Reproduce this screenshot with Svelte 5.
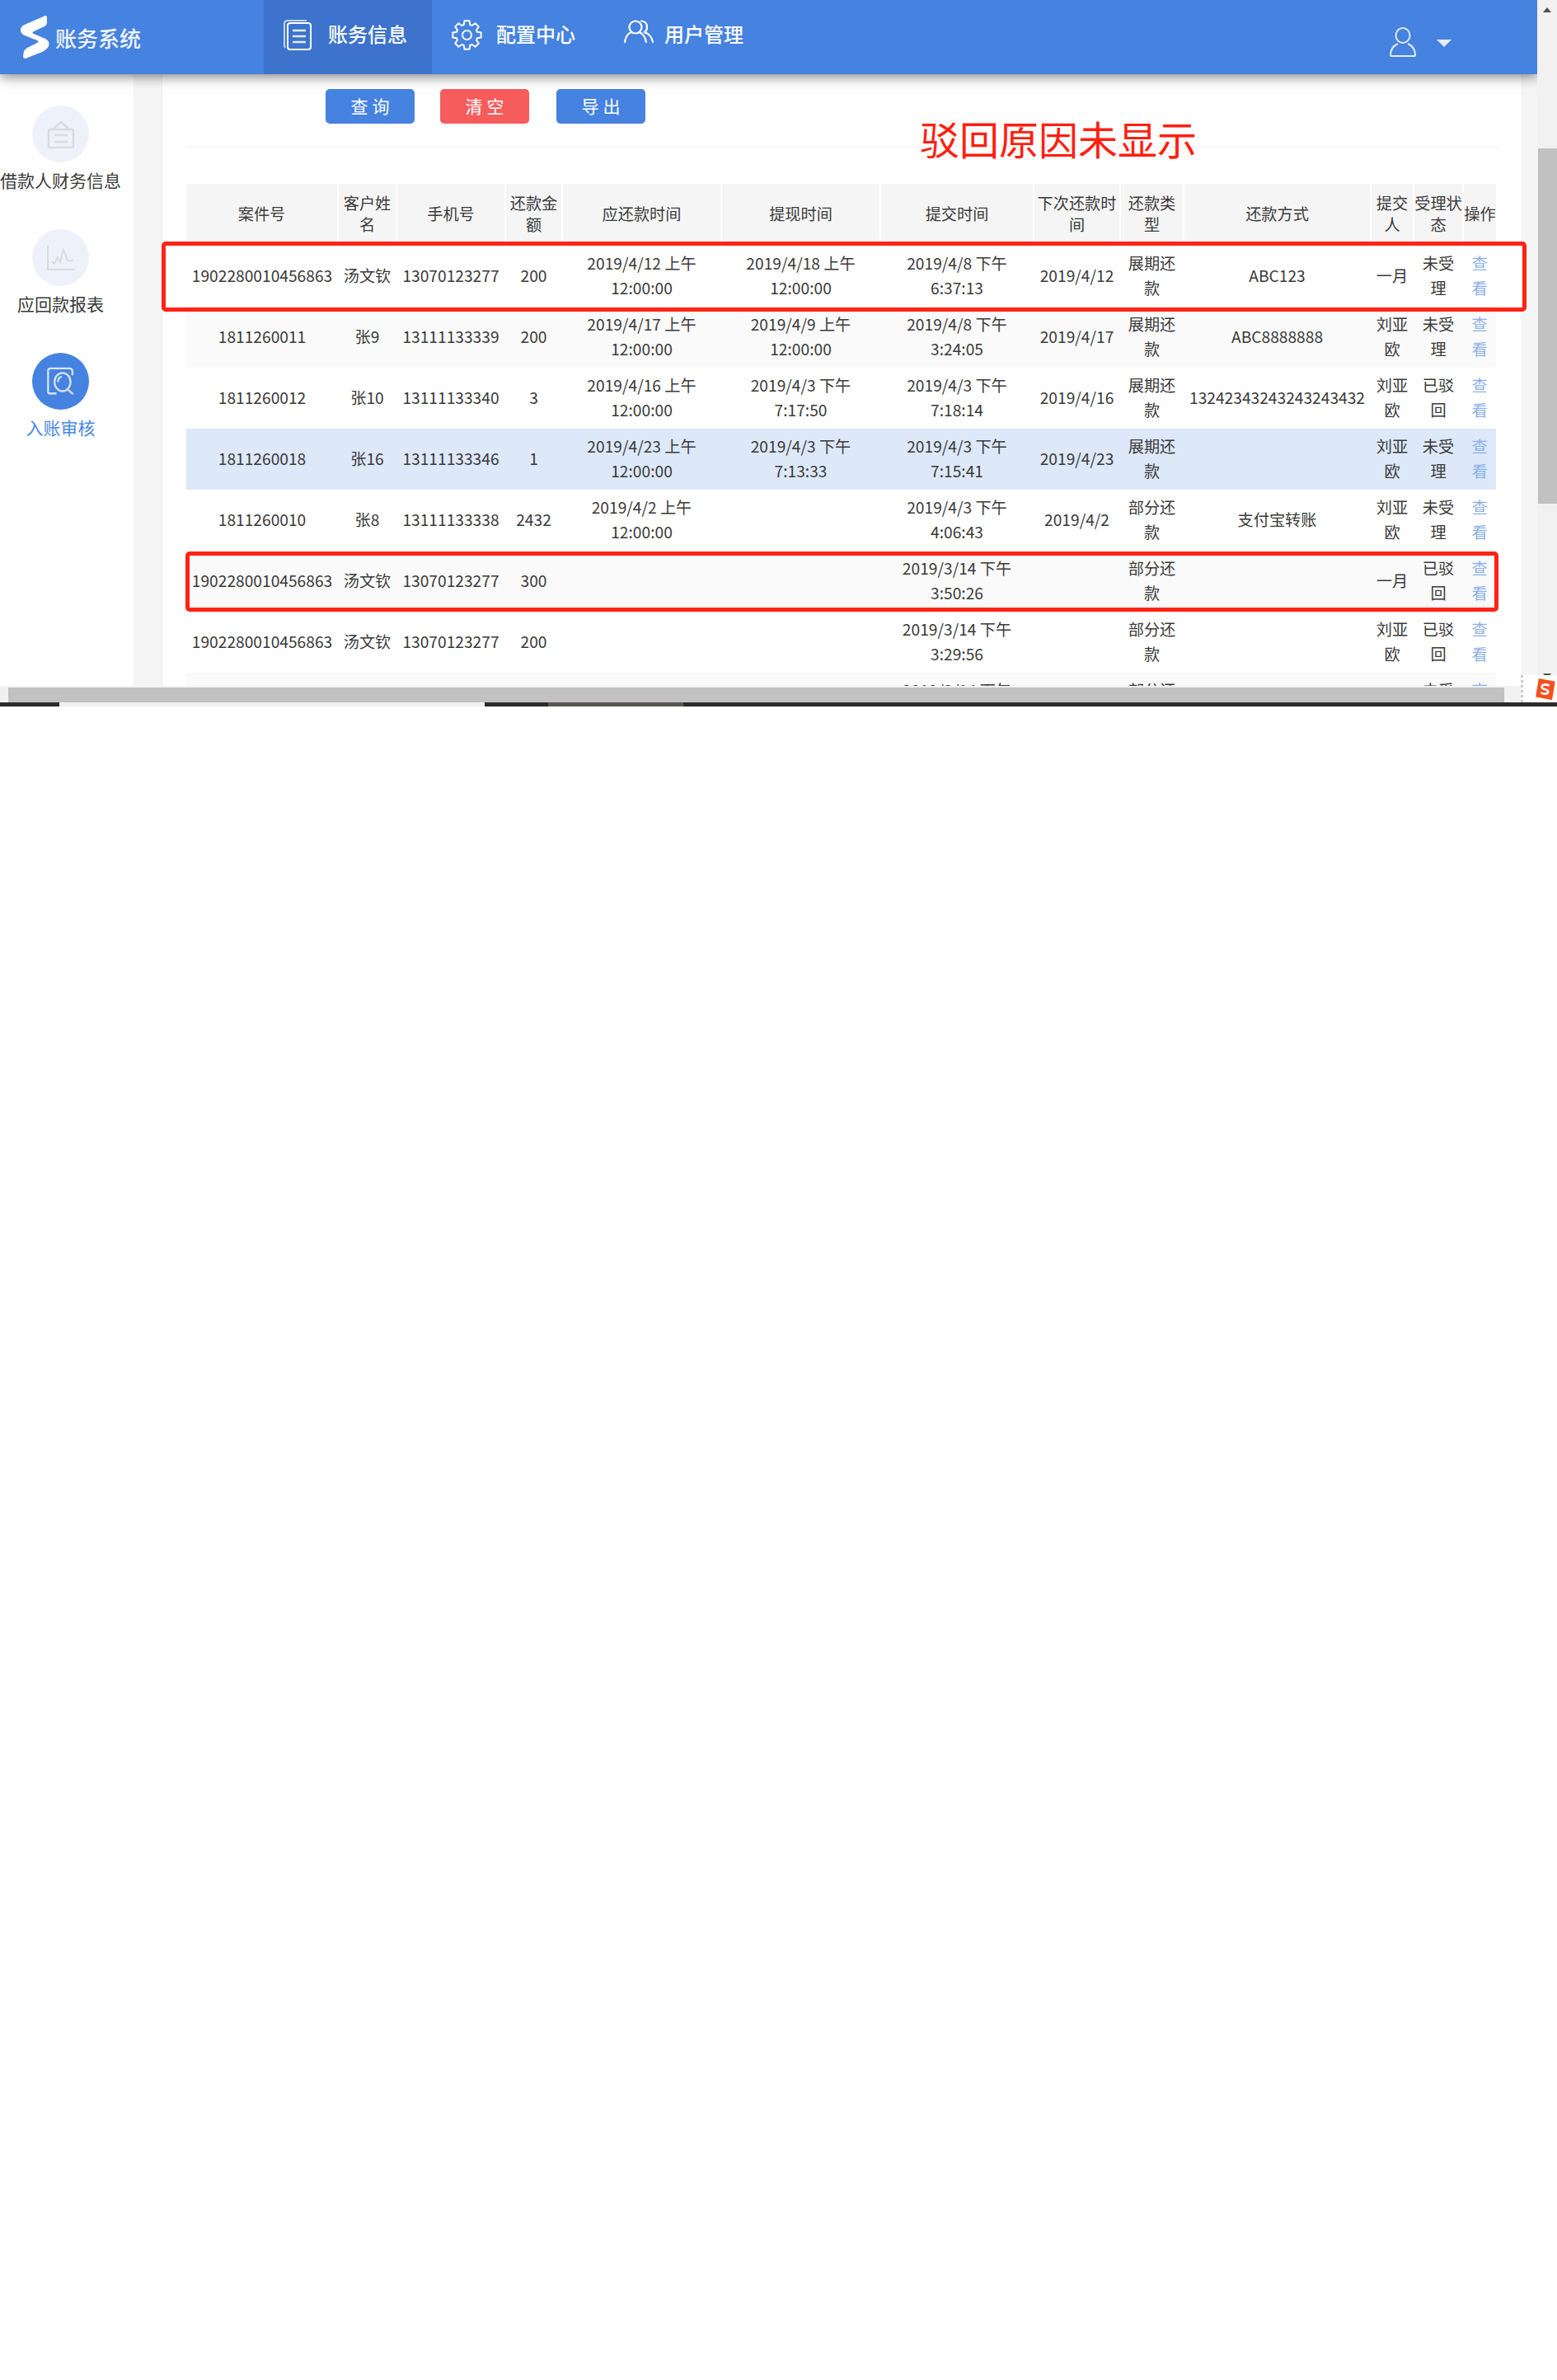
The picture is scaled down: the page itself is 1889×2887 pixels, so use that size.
<script>
  const columns = ["案件号", "客户姓名", "手机号", "还款金额", "应还款时间", "提现时间", "提交时间", "下次还款时间", "还款类型", "还款方式", "提交人", "受理状态", "操作"]

  const rows = [
    ["1902280010456863", "汤文钦", "13070123277", "200", "2019/4/12 上午 12:00:00", "2019/4/18 上午 12:00:00", "2019/4/8 下午 6:37:13", "2019/4/12", "展期还款", "ABC123", "一月", "未受理"],
    ["1811260011", "张9", "13111133339", "200", "2019/4/17 上午 12:00:00", "2019/4/9 上午 12:00:00", "2019/4/8 下午 3:24:05", "2019/4/17", "展期还款", "ABC8888888", "刘亚欧", "未受理"],
    ["1811260012", "张10", "13111133340", "3", "2019/4/16 上午 12:00:00", "2019/4/3 下午 7:17:50", "2019/4/3 下午 7:18:14", "2019/4/16", "展期还款", "13242343243243243432", "刘亚欧", "已驳回"],
    ["1811260018", "张16", "13111133346", "1", "2019/4/23 上午 12:00:00", "2019/4/3 下午 7:13:33", "2019/4/3 下午 7:15:41", "2019/4/23", "展期还款", "", "刘亚欧", "未受理"],
    ["1811260010", "张8", "13111133338", "2432", "2019/4/2 上午 12:00:00", "", "2019/4/3 下午 4:06:43", "2019/4/2", "部分还款", "支付宝转账", "刘亚欧", "未受理"],
    ["1902280010456863", "汤文钦", "13070123277", "300", "", "", "2019/3/14 下午 3:50:26", "", "部分还款", "", "一月", "已驳回"],
    ["1902280010456863", "汤文钦", "13070123277", "200", "", "", "2019/3/14 下午 3:29:56", "", "部分还款", "", "刘亚欧", "已驳回"],
    ["1902280010456863", "汤文钦", "13070123277", "200", "", "", "2019/3/14 下午 3:20:11", "", "部分还款", "", "一月", "未受理"],
  ]

  const widths = [184, 71, 132, 69, 193, 193, 186, 105, 77, 227, 52, 60, 40]

  // the three time columns wrap earlier than the others
  const isTime = (col) => col >= 4 && col <= 6

  // 8-tooth gear outline
  function gear(cx, cy, outer, inner) {
    const pts = []
    for (let i = 0; i < 8; i++) {
      const a = (i * Math.PI) / 4
      for (const [off, r] of [[-0.3, inner], [-0.17, outer], [0.17, outer], [0.3, inner]]) {
        pts.push(`${(cx + r * Math.sin(a + off)).toFixed(1)} ${(cy - r * Math.cos(a + off)).toFixed(1)}`)
      }
    }
    return "M" + pts.join(" L") + " Z"
  }
</script>

<div class="window">
  <header class="topbar">
    <div class="logo">
      <svg width="40" height="54" viewBox="0 0 40 54">
        <path d="M31 1 Q33 1 33 4 L33 10 Q33 12 30 14 L17 20 Q14 22 17 23 L31 29 Q37 32 35 38 Q33 42 27 45 L7 53 Q4 53 4 50 L5 44 Q6 42 9 40 L21 34 Q24 32 21 31 L6 25 Q0 22 1 17 Q2 13 8 11 Z" fill="#fff" />
      </svg>
      <span>账务系统</span>
    </div>
    <nav class="tabs">
      <div class="tab active">
        <svg width="34" height="37" viewBox="0 0 34 37" fill="none" stroke="#fff" stroke-width="2">
          <path d="M2 34 Q1 33 1 30 V5 Q1 1 5 1 H28" stroke-opacity="0.7" />
          <rect x="5" y="4" width="28" height="32" rx="3" />
          <path d="M11 13 H27 M11 20 H27 M11 27 H27" stroke-width="2.5" stroke-opacity="0.85" />
        </svg>
        <span>账务信息</span>
      </div>
      <div class="tab">
        <svg width="37" height="37" viewBox="0 0 37 37" fill="none" stroke="#fff" stroke-width="2">
          <path d={gear(18.5, 18.5, 17.5, 13)} stroke-linejoin="round" />
          <circle cx="18.5" cy="18.5" r="5.5" />
        </svg>
        <span>配置中心</span>
      </div>
      <div class="tab">
        <svg width="37" height="29" viewBox="0 0 37 29" fill="none" stroke="#fff" stroke-width="2.2" stroke-linecap="round">
          <circle cx="14" cy="9" r="7.5" />
          <path d="M1 27 Q3 16 10 15 M18 15 Q25 17 27 27" />
          <path d="M21 1.5 Q28 2 28 9 Q28 14 24 15 Q33 17 35 27" />
        </svg>
        <span>用户管理</span>
      </div>
    </nav>
    <div class="user">
      <svg width="32" height="36" viewBox="0 0 32 36" fill="none" stroke="#fff" stroke-width="2" stroke-opacity="0.85">
        <ellipse cx="16" cy="10" rx="8.5" ry="9" />
        <path d="M10 20 Q1 24 1 34 Q1 35 3 35 H29 Q31 35 31 34 Q31 24 22 20" />
      </svg>
      <span class="caret"></span>
    </div>
  </header>

  <div class="body">
    <aside class="sidebar">
      <div class="item">
        <div class="circle">
          <svg width="34" height="34" viewBox="0 0 34 34" fill="none" stroke="#d9dbdf" stroke-width="2.5">
            <path d="M7 11 L17 2 L27 11" />
            <rect x="2" y="11" width="30" height="22" rx="2" />
            <path d="M9 18 H25 M9 26 H25" />
          </svg>
        </div>
        <p>借款人财务信息</p>
      </div>
      <div class="item">
        <div class="circle">
          <svg width="34" height="30" viewBox="0 0 34 30" fill="none" stroke="#d9dbdf" stroke-width="2">
            <path d="M1 0 V29 H34" />
            <path d="M6 19 L9 22 L13 14 L16 20 L20 5 L25 18 L32 18" />
          </svg>
        </div>
        <p>应回款报表</p>
      </div>
      <div class="item on">
        <div class="circle">
          <svg width="34" height="35" viewBox="0 0 36 38" fill="none" stroke="#d6e3f8" stroke-width="2.5">
            <path d="M12 35 H3 Q1 35 1 33 V5 Q1 2 4 2 H29 Q33 2 33 6 V11" />
            <ellipse cx="20" cy="20" rx="10.5" ry="12" />
            <path d="M27 30 L34 36" />
            <path d="M14 20 Q14 14 19 13" />
          </svg>
        </div>
        <p>入账审核</p>
      </div>
    </aside>

    <main class="content">
      <div class="buttons">
        <button class="btn">查询</button>
        <button class="btn danger">清空</button>
        <button class="btn">导出</button>
      </div>
      <div class="divider"></div>
      <table>
        <colgroup>
          {#each widths as w}
            <col style="width: {w}px" />
          {/each}
        </colgroup>
        <thead>
          <tr>
            {#each columns as c}
              <th>{c}</th>
            {/each}
          </tr>
        </thead>
        <tbody>
          {#each rows as row, i}
            <tr class:striped={i % 2 === 1} class:selected={i === 3}>
              {#each row as cell, col}
                <td class:time={isTime(col)}>{cell}</td>
              {/each}
              <td class="link">查看</td>
            </tr>
          {/each}
        </tbody>
      </table>
    </main>
  </div>

  <!-- annotations drawn over the screenshot -->
  <div class="note">驳回原因未显示</div>
  <div class="mark first"></div>
  <div class="mark second"></div>

  <div class="vbar">
    <span class="arrow up"></span>
    <div class="thumb"></div>
    <span class="arrow down"></span>
  </div>
  <div class="hbar"><div class="hthumb"></div></div>
  <div class="ime">
    <svg width="25" height="26" viewBox="0 0 28 30">
      <path d="M6 1 L27 5 L23 29 L2 25 Z" fill="#f4511e" stroke="#f4511e" stroke-width="2" stroke-linejoin="round" />
      <path d="M20 10 Q13 7 10 10 Q8 13 13 15 Q19 16 18 20 Q15 23 8 20" fill="none" stroke="#fff" stroke-width="3" />
    </svg>
  </div>
  <div class="taskbar">
    <i class="dark" style="width: 72px"></i>
    <i class="light" style="width: 516px"></i>
    <i class="dark" style="width: 77px"></i>
    <i class="mid" style="width: 164px"></i>
    <i class="dark" style="flex: 1"></i>
  </div>
</div>

<style>
  :global(body) {
    background: #fff;
    font-family: "Noto Sans CJK SC", sans-serif;
  }

  .window {
    position: relative;
    width: 1889px;
    height: 857px;
    overflow: hidden;
    color: #3a3a3a;
    font-size: 19.2px;
    font-family: "Noto Sans CJK SC", sans-serif;
  }

  .topbar {
    position: relative;
    z-index: 2;
    width: 1865px;
    height: 90px;
    display: flex;
    background: #4682e0;
    color: #fff;
    box-shadow: 0 3px 14px rgba(0, 0, 0, 0.5);
  }

  .logo {
    width: 320px;
    display: flex;
    align-items: center;
    padding-left: 24px;
    box-sizing: border-box;
    gap: 3px;
    font-size: 26px;
    font-weight: 500;
  }

  .logo span {
    opacity: 0.92;
  }

  .tabs {
    display: flex;
  }

  .tab {
    height: 90px;
    display: flex;
    align-items: flex-start;
    gap: 20px;
    padding: 24px 24px 0;
    box-sizing: border-box;
    font-size: 24px;
    line-height: 34px;
    width: 204px;
    font-weight: 500;
  }

  .tab.active {
    background: #3d73cd;
  }

  .tab:nth-child(2) {
    gap: 17px;
  }

  .tab:nth-child(3) {
    padding-left: 29px;
    gap: 12px;
  }

  .user {
    margin-left: auto;
    margin-right: 104px;
    display: flex;
    align-items: flex-start;
    padding-top: 33px;
    gap: 25px;
  }

  .caret {
    margin-top: 15px;
    border-left: 9px solid transparent;
    border-right: 9px solid transparent;
    border-top: 9px solid #e6eefb;
  }

  .body {
    display: flex;
    height: 742px;
    width: 1865px;
  }

  .sidebar {
    width: 162px;
    flex: none;
    padding-top: 38px;
    background: #fff;
  }

  .item {
    width: 147px;
    height: 150px;
    display: flex;
    flex-direction: column;
    align-items: center;
  }

  .circle {
    width: 69px;
    height: 69px;
    border-radius: 50%;
    background: #eef1fa;
    display: flex;
    align-items: center;
    justify-content: center;
  }

  .item.on .circle {
    background: #4682e0;
  }

  .item p {
    margin: 6px 0 0;
    font-size: 21px;
    line-height: 30px;
    white-space: nowrap;
  }

  .item.on p {
    color: #4a88e4;
  }

  .content {
    flex: 1;
    margin-left: 34px;
    margin-right: 20px;
    padding: 18px 0 0 29px;
    background: #fff;
    border-left: 1px solid #efefef;
    overflow: hidden;
    box-sizing: border-box;
    box-shadow: -34px 0 0 #f5f5f5, 20px 0 0 #f5f5f5;
    clip-path: inset(0 -20px 0 -34px);
  }

  .buttons {
    display: flex;
    gap: 31px;
    padding-left: 169px;
  }

  .btn {
    width: 108px;
    height: 42px;
    padding: 0 0 3px 5px;
    border: 0;
    border-radius: 5px;
    background: #4682e0;
    color: #fff;
    font: inherit;
    font-size: 21px;
    letter-spacing: 5px;
  }

  .btn.danger {
    background: #f75c5c;
  }

  .btn.danger + .btn {
    margin-left: 2px;
  }

  .divider {
    height: 2px;
    width: 1592px;
    margin-top: 27px;
    background: #f6f6f6;
  }

  table {
    margin-top: 44px;
    width: 1589px;
    table-layout: fixed;
    border-collapse: collapse;
  }

  th {
    height: 72px;
    padding: 0 0 3px;
    font-weight: 400;
    line-height: 26px;
    background: #f5f5f5;
    border-right: 2px solid #fff;
  }

  th:last-child {
    border-right: 0;
  }

  td {
    height: 74px;
    padding: 0 4px 2px;
    box-sizing: border-box;
    text-align: center;
    line-height: 30px;
  }

  td.time {
    padding: 0 12px 2px;
  }

  tr.striped td {
    background: #fafafa;
  }

  tr.selected td {
    background: #dde8f9;
  }

  td.link {
    color: #8bb0ec;
    padding: 0 6px 2px;
  }

  .note {
    position: absolute;
    left: 1116px;
    top: 133px;
    font-size: 48px;
    line-height: 68px;
    color: #ff1f10;
    z-index: 3;
  }

  .mark {
    position: absolute;
    z-index: 3;
    box-sizing: border-box;
    border: 5px solid #ff2415;
    border-radius: 5px;
  }

  .mark.first {
    left: 196px;
    top: 293px;
    width: 1656px;
    height: 85px;
  }

  .mark.second {
    left: 225px;
    top: 669px;
    width: 1593px;
    height: 73px;
  }

  .vbar {
    position: absolute;
    z-index: 4;
    right: 0;
    top: 0;
    width: 24px;
    height: 832px;
    background: #f1f1f1;
  }

  .thumb {
    position: absolute;
    left: 1px;
    right: 0;
    top: 180px;
    height: 431px;
    background: #c1c1c1;
  }

  .arrow {
    position: absolute;
    left: 7px;
    border-left: 5px solid transparent;
    border-right: 5px solid transparent;
  }

  .arrow.up {
    top: 9px;
    border-bottom: 6px solid #505050;
  }

  .arrow.down {
    top: 817px;
    border-top: 6px solid #505050;
  }

  .hbar {
    position: absolute;
    z-index: 4;
    left: 0;
    top: 832px;
    width: 1845px;
    height: 20px;
    background: #f1f1f1;
  }

  .hthumb {
    position: absolute;
    left: 10px;
    top: 2px;
    bottom: 0;
    width: 1815px;
    background: #c1c1c1;
  }

  .ime {
    position: absolute;
    z-index: 5;
    left: 1845px;
    top: 819px;
    width: 44px;
    height: 33px;
    background: #fff;
    display: flex;
    align-items: center;
    justify-content: flex-end;
    padding-right: 2px;
    box-sizing: border-box;
    border-left: 3px dotted #ccc;
  }

  .taskbar {
    position: absolute;
    left: 0;
    right: 0;
    top: 852px;
    height: 5px;
    display: flex;
    z-index: 5;
  }

  .dark {
    background: #2f2a26;
  }

  .light {
    background: #f0f0f0;
  }

  .mid {
    background: #5a5650;
  }
</style>
